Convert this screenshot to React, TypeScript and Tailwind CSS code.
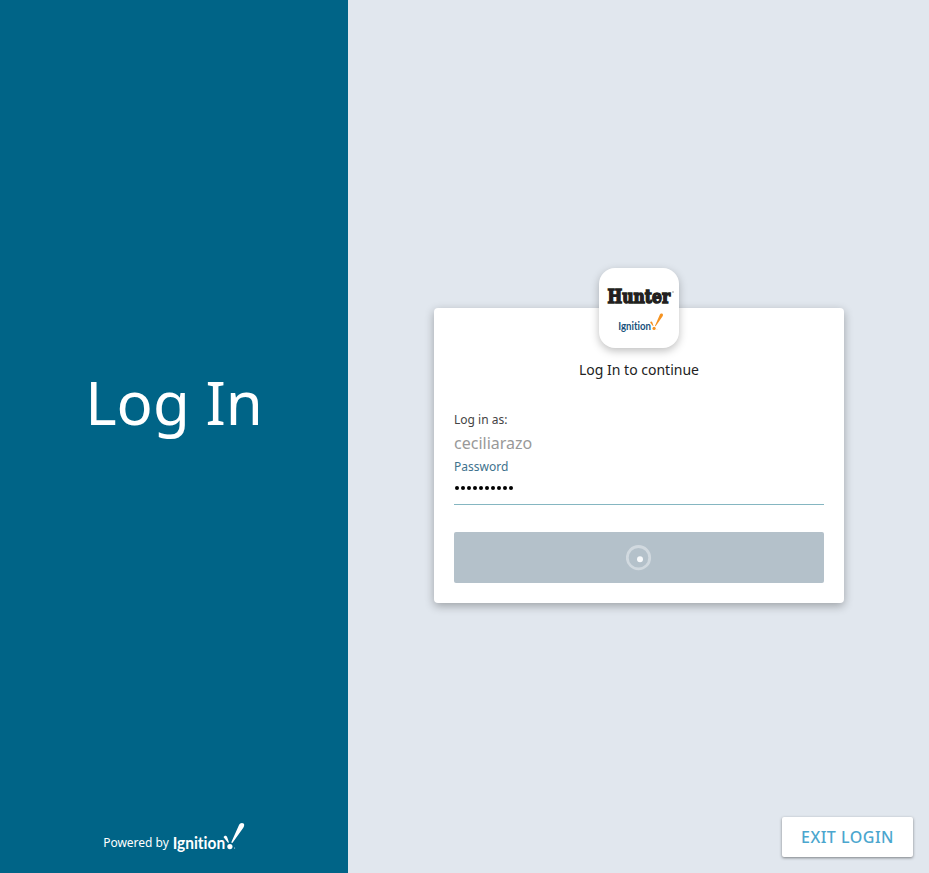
type MarkProps = { className: string; ink: string; spark: string };

function IgnitionLogo({ className, ink, spark }: MarkProps) {
  return (
    <svg className={className} viewBox="0 0 72 32" role="img" aria-label="Ignition">
      <text x="-0.3" y="26.6" fontFamily="Lato, sans-serif" fontWeight="700" fontSize="17.2" fill={ink} textLength="52.4" lengthAdjust="spacingAndGlyphs" className="[font-variant-ligatures:none]">
        Ignition
      </text>
      <path d="M50.6 15.2 C51.2 13.2 53.6 13.2 54.2 15.2 L56 20.6 L55 20.8 Z" fill={spark} />
      <path d="M58.2 20.6 L65.9 3.2 C66.9 .8 69.4 .4 70.6 1.6 C71.6 2.7 71.3 4 70.3 5.7 L59.4 21 Z" fill={spark} />
      <circle cx="56.9" cy="24.6" r="2.6" fill={spark} />
      <circle cx="61.6" cy="25.9" r=".5" fill={spark} />
    </svg>
  );
}

function HunterLogo() {
  return (
    <svg className="block h-5 w-[70px] overflow-visible" viewBox="0 0 70 20" role="img" aria-label="Hunter">
      <text x="3.6" y="15.4" fontFamily="'DejaVu Serif', serif" fontWeight="700" fontSize="17.8" fill="#231f20" stroke="#231f20" strokeWidth="1.5" textLength="62.5" lengthAdjust="spacingAndGlyphs">
        Hunter
      </text>
      <circle cx="69" cy="4" r=".7" fill="#777" />
    </svg>
  );
}

export default function App() {
  return (
    <main className="flex h-screen w-full overflow-hidden bg-[#e1e7ee] font-['Noto_Sans',sans-serif]">
      <aside className="flex w-[348px] shrink-0 flex-col items-center bg-[#006487] text-white">
        <h1 className="mt-[361px] text-[60px] leading-[82px]">Log In</h1>
        <div className="mt-auto mb-[19px] flex h-8 items-start">
          <span className="mt-3 text-[12px] leading-[18px]">Powered by</span>
          <IgnitionLogo className="ml-1 h-8 w-[72px]" ink="#fff" spark="#fff" />
        </div>
      </aside>
      <section className="flex flex-1 flex-col items-center">
        <form className="mt-[308px] ml-px flex h-[295px] w-[410px] shrink-0 flex-col rounded bg-white px-5 shadow-[0_3px_10px_rgba(0,0,0,0.3)]">
          <div className="-mt-10 flex h-20 w-20 shrink-0 flex-col items-center self-center rounded-2xl bg-white pt-5 shadow-[0_3px_9px_rgba(0,0,0,0.25)]">
            <HunterLogo />
            <IgnitionLogo className="mt-[5px] ml-1 h-5 w-[46px]" ink="#17517b" spark="#f59322" />
          </div>
          <p className="mt-3 text-center text-[14px] leading-5 text-[#222]">Log In to continue</p>
          <p className="mt-[31px] text-[12px] leading-[18px] text-[#444]">Log in as:</p>
          <p className="mt-0.5 text-[16px] leading-6 text-[#999]">ceciliarazo</p>
          <label className="mt-[3px] text-[12px] leading-[18px] text-[#40728d]">Password</label>
          <div className="flex h-[29px] items-center border-b border-[#85b6c1] pb-1 text-black">
            <span className="flex pl-px">
              {Array.from({ length: 10 }, (_, i) => (
                <i key={i} className="mr-0.5 h-1 w-1 rounded-full bg-black" />
              ))}
            </span>
          </div>
          <button type="button" aria-label="Logging in" className="mt-[27px] flex h-[51px] w-full shrink-0 items-center justify-center rounded-xs bg-[#b4c1ca]">
            <svg className="h-[26px] w-[26px]" viewBox="0 0 26 26">
              <circle cx="12.5" cy="12.7" r="11.2" fill="none" stroke="#d1d9df" strokeWidth="2.8" />
              <circle cx="14" cy="14.2" r="3" fill="#f8fafc" />
            </svg>
          </button>
        </form>
        <button type="button" className="mt-auto mr-4 mb-4 h-10 w-[131px] self-end rounded-xs bg-white text-[16px] font-medium tracking-[0.5px] text-[#4ba6ce] shadow-[0_1px_3px_rgba(0,0,0,0.45)]">
          EXIT LOGIN
        </button>
      </section>
    </main>
  );
}
